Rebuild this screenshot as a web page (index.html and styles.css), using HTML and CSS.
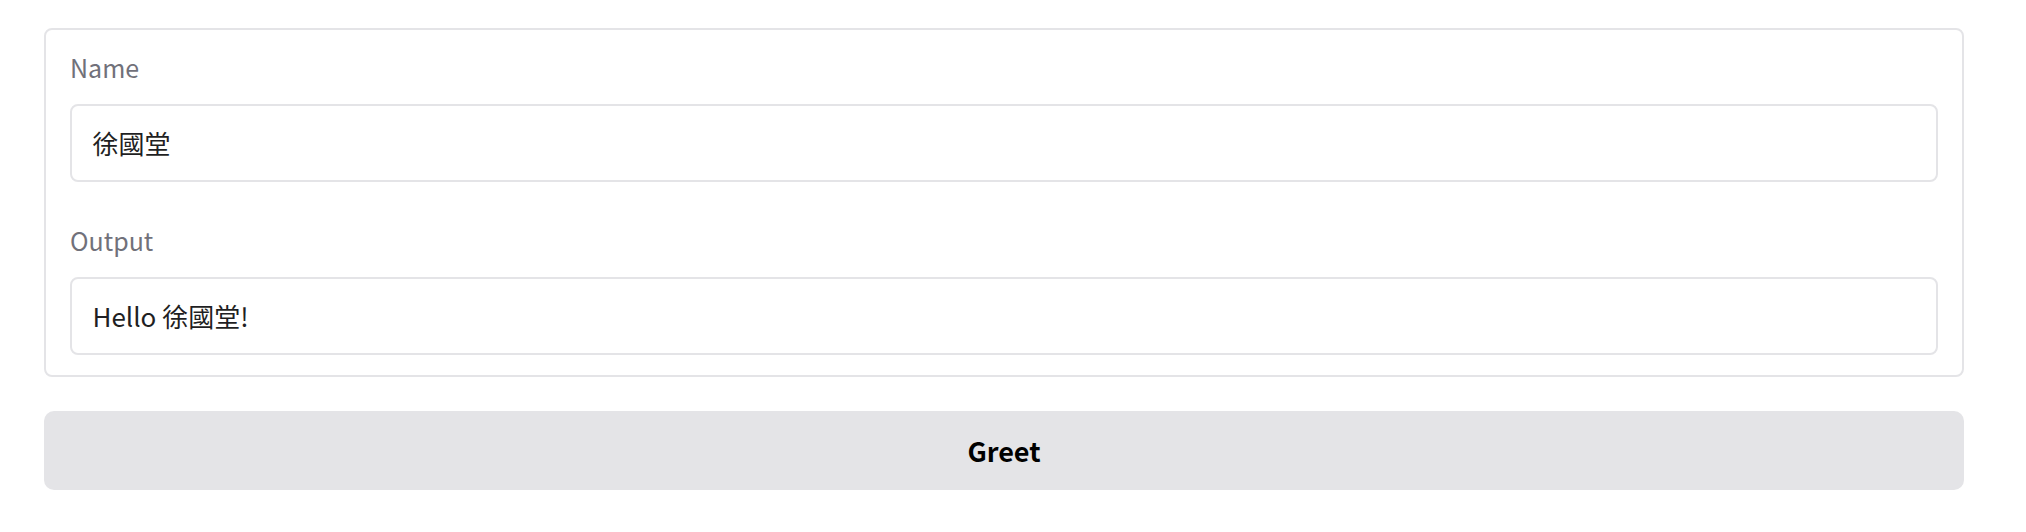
FILE: index.html
```html
<!DOCTYPE html>
<html>
<head>
<meta charset="utf-8">
<link rel="stylesheet" href="styles.css">
</head>
<body>
<div class="page">
  <div class="form">
    <div class="block">
      <label class="label">Name</label>
      <div class="input">徐國堂</div>
    </div>
    <div class="block">
      <label class="label">Output</label>
      <div class="input">Hello 徐國堂!</div>
    </div>
  </div>
  <button class="btn">Greet</button>
</div>
</body>
</html>
```

FILE: styles.css
```css
html, body {
  margin: 0;
  padding: 0;
  background: #ffffff;
}
body {
  font-family: "Noto Sans CJK TC", "Noto Sans", sans-serif;
}
.page {
  width: 1920px;
  margin-left: 44px;
  padding-top: 28px;
  display: flex;
  flex-direction: column;
  gap: 34px;
}
.form {
  border: 2px solid #e4e4e7;
  border-radius: 8px;
  padding: 18.5px 24px 20px;
  display: flex;
  flex-direction: column;
  gap: 40px;
}
.block {
  display: flex;
  flex-direction: column;
}
.label {
  font-size: 25px;
  line-height: 36px;
  color: #71717a;
  margin-bottom: 19px;
}
.input {
  box-sizing: border-box;
  height: 78px;
  border: 2px solid #e4e4e7;
  border-radius: 8px;
  padding: 0 20.5px;
  display: flex;
  align-items: center;
  font-size: 26px;
  color: #1f1f23;
}
.btn {
  box-sizing: border-box;
  height: 79px;
  border: none;
  border-radius: 10px;
  background: #e4e4e7;
  font-family: "Noto Sans CJK TC", "Noto Sans", sans-serif;
  font-size: 27px;
  font-weight: 700;
  color: #000;
}
```
